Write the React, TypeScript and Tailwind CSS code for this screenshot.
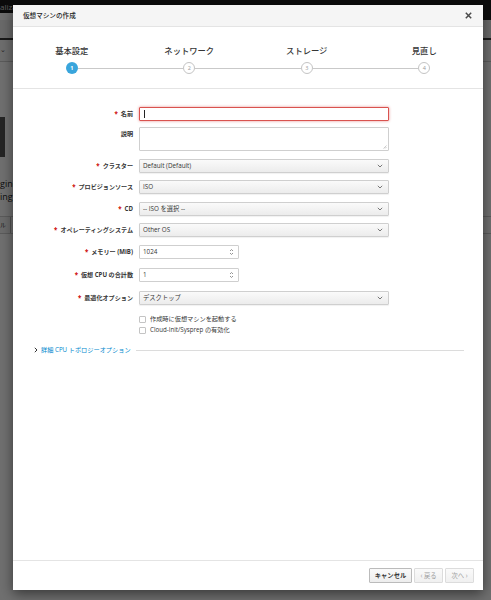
import React from "react";

const steps = ["基本設定", "ネットワーク", "ストレージ", "見直し"];

type FieldProps = {
    label: string;
    required?: boolean;
    className?: string;
    children: React.ReactNode;
};

function Chevron() {
    return (
        <svg width="6" height="4" viewBox="0 0 6 4" className="shrink-0">
            <path d="M0.8 0.8 L3 3 L5.2 0.8" fill="none" stroke="#777" strokeWidth="1" />
        </svg>
    );
}

function Spinner() {
    return (
        <svg width="5" height="8" viewBox="0 0 5 8" className="shrink-0">
            <path d="M1 3 L2.5 1.5 L4 3" fill="none" stroke="#888" strokeWidth="0.9" />
            <path d="M1 5 L2.5 6.5 L4 5" fill="none" stroke="#888" strokeWidth="0.9" />
        </svg>
    );
}

function Field({ label, required, className, children }: FieldProps) {
    return (
        <div className={"flex items-start gap-[6px] " + (className ?? "")}>
            <div className="w-[120px] h-[14px] flex items-center justify-end text-[6.1px] font-bold text-[#363636] whitespace-nowrap">
                {required && <span className="text-[#cc0000] mr-[3px]">*</span>}
                {label}
            </div>
            {children}
        </div>
    );
}

function Select({ value }: { value: string }) {
    return (
        <div className="w-[250px] h-[14px] flex items-center justify-between pl-[3px] pr-[5px] border border-[#cfcfcf] rounded-[1px] bg-linear-to-b from-[#fafafa] to-[#ececec] shadow-[0_1px_1px_rgba(0,0,0,0.06)] text-[6.3px] text-[#363636]">
            <span>{value}</span>
            <Chevron />
        </div>
    );
}

function NumberInput({ value }: { value: string }) {
    return (
        <div className="w-[100px] h-[14px] flex items-center justify-between pl-[3px] pr-[4px] border border-[#cfcfcf] rounded-[1px] bg-white text-[6.3px] text-[#363636]">
            <span>{value}</span>
            <Spinner />
        </div>
    );
}

function Check({ label }: { label: string }) {
    return (
        <div className="flex items-center h-[10px] pl-[126px]">
            <div className="w-[7px] h-[7px] border border-[#c4c4c4] bg-white rounded-[1px]" />
            <span className="ml-[4px] text-[6.2px] text-[#363636]">{label}</span>
        </div>
    );
}

function BackgroundPage() {
    return (
        <div className="flex flex-col h-full">
            <div className="flex h-[20px]">
                <div className="w-[60px] h-[13px] bg-[#1c1c1c] text-[#d4d4d4] text-[8px] leading-[13px] overflow-hidden whitespace-nowrap">
                    <span>alization</span>
                </div>
                <div className="flex-1 h-[20px] bg-[#1c1c1c]" />
            </div>
            <div className="h-[20px] border-b-[2px] border-[#3a3a3a] bg-[#f2f2f2]" />
            <div className="h-[22px] border-b border-[#d0d0d0] flex items-center text-[7px] text-[#555] bg-[#fafafa]">
                <span>⌄</span>
            </div>
            <div className="h-[55px]" />
            <div className="w-[5px] h-[40px] bg-[#555]" />
            <div className="mt-[20px] text-[9px] leading-[13px] text-[#222] whitespace-nowrap">
                <div>gine</div>
                <div>ing</div>
            </div>
            <div className="mt-[13px] flex h-[18px] border-y border-[#cfcfcf]">
                <div className="w-[11px] border-r border-[#bbb] bg-[#f6f6f6] text-[6px] leading-[16px] text-[#333]">ル</div>
            </div>
        </div>
    );
}

export default function App() {
    return (
        <div className="relative w-[491px] h-[600px] overflow-hidden bg-white font-['Open_Sans','Noto_Sans_CJK_JP',sans-serif]">
            <BackgroundPage />
            <div className="absolute inset-0 bg-black/[0.56]" />

            <div className="absolute left-[13px] top-[5px] w-[470px] h-[585px] bg-white flex flex-col shadow-[0_4px_12px_rgba(0,0,0,0.5)]">
                {/* header */}
                <div className="h-[22px] shrink-0 flex items-center justify-between pl-[10px] pr-[11px] bg-[#f5f5f5] border-b border-[#e4e4e4]">
                    <span className="text-[6.6px] font-medium text-[#222]">仮想マシンの作成</span>
                    <svg width="7" height="7" viewBox="0 0 7 7">
                        <path d="M0.8 0.8 L6.2 6.2 M6.2 0.8 L0.8 6.2" stroke="#4a4a4a" strokeWidth="1.5" />
                    </svg>
                </div>

                {/* wizard steps */}
                <div className="h-[62px] shrink-0 grid grid-cols-4 pt-[18px] border-b border-[#e4e4e4]">
                    {steps.map((s, i) => (
                        <div key={s} className="flex flex-col items-center">
                            <div className="h-[12px] leading-[12px] text-[8.3px] font-medium text-[#363636]">{s}</div>
                            <div className="mt-[5px] flex w-full items-center">
                                <div className={"h-px flex-1 " + (i === 0 ? "bg-transparent" : "bg-[#c9c9c9]")} />
                                {i === 0 ? (
                                    <div className="w-[12px] h-[12px] rounded-full bg-[#39a5dc] flex items-center justify-center text-[5.5px] font-bold text-white">
                                        {i + 1}
                                    </div>
                                ) : (
                                    <div className="w-[12px] h-[12px] rounded-full bg-white border-[1.5px] border-[#c4c4c4] flex items-center justify-center text-[5.5px] text-[#9a9a9a]">
                                        {i + 1}
                                    </div>
                                )}
                                <div className={"h-px flex-1 " + (i === 3 ? "bg-transparent" : "bg-[#c9c9c9]")} />
                            </div>
                        </div>
                    ))}
                </div>

                {/* body */}
                <div className="flex-1 flex flex-col pt-[18px]">
                    <Field label="名前" required>
                        <div className="w-[250px] h-[14px] flex items-center pl-[4px] border border-[#d9534f] rounded-[1px] bg-white shadow-[0_0_3px_rgba(204,0,0,0.45)]">
                            <div className="w-px h-[8px] bg-[#222]" />
                        </div>
                    </Field>
                    <Field label="説明" className="mt-[6px]">
                        <div className="relative w-[250px] h-[24px] border border-[#cfcfcf] rounded-[1px] bg-white">
                            <svg width="4" height="4" viewBox="0 0 4 4" className="absolute right-[1px] bottom-[1px]">
                                <path d="M0.5 3.5 L3.5 0.5 M2 3.5 L3.5 2" stroke="#aaa" strokeWidth="0.6" />
                            </svg>
                        </div>
                    </Field>
                    <Field label="クラスター" required className="mt-[8px]">
                        <Select value="Default (Default)" />
                    </Field>
                    <Field label="プロビジョンソース" required className="mt-[7px]">
                        <Select value="ISO" />
                    </Field>
                    <Field label="CD" required className="mt-[8px]">
                        <Select value="-- ISO を選択 --" />
                    </Field>
                    <Field label="オペレーティングシステム" required className="mt-[7px]">
                        <Select value="Other OS" />
                    </Field>
                    <Field label="メモリー (MiB)" required className="mt-[8px]">
                        <NumberInput value="1024" />
                    </Field>
                    <Field label="仮想 CPU の合計数" required className="mt-[9px]">
                        <NumberInput value="1" />
                    </Field>
                    <Field label="最適化オプション" required className="mt-[9px]">
                        <Select value="デスクトップ" />
                    </Field>

                    <div className="mt-[9px]">
                        <Check label="作成時に仮想マシンを起動する" />
                    </div>
                    <div className="mt-[1px]">
                        <Check label="Cloud-Init/Sysprep の有効化" />
                    </div>

                    <div className="mt-[10px] flex items-center h-[10px] pl-[21px] pr-[19px]">
                        <svg width="4" height="6" viewBox="0 0 4 6" className="shrink-0">
                            <path d="M0.8 0.8 L3 3 L0.8 5.2" fill="none" stroke="#363636" strokeWidth="1" />
                        </svg>
                        <span className="ml-[3px] text-[6.2px] text-[#0088ce] whitespace-nowrap">詳細 CPU トポロジーオプション</span>
                        <div className="ml-[5px] h-px flex-1 bg-[#dcdcdc]" />
                    </div>
                </div>

                {/* footer */}
                <div className="h-[30px] shrink-0 flex items-center justify-end gap-[2px] pr-[9px] border-t border-[#e4e4e4]">
                    <button className="h-[15px] w-[43px] border border-[#bbb] rounded-[1px] bg-linear-to-b from-[#fafafa] to-[#ededed] text-[6.3px] font-bold text-[#363636]">
                        キャンセル
                    </button>
                    <button className="h-[15px] w-[29px] border border-[#dcdcdc] rounded-[1px] bg-linear-to-b from-[#fafafa] to-[#f0f0f0] text-[6.3px] text-[#9c9c9c]">
                        ‹ 戻る
                    </button>
                    <button className="h-[15px] w-[29px] border border-[#dcdcdc] rounded-[1px] bg-linear-to-b from-[#fafafa] to-[#f0f0f0] text-[6.3px] text-[#9c9c9c]">
                        次へ ›
                    </button>
                </div>
            </div>
        </div>
    );
}
